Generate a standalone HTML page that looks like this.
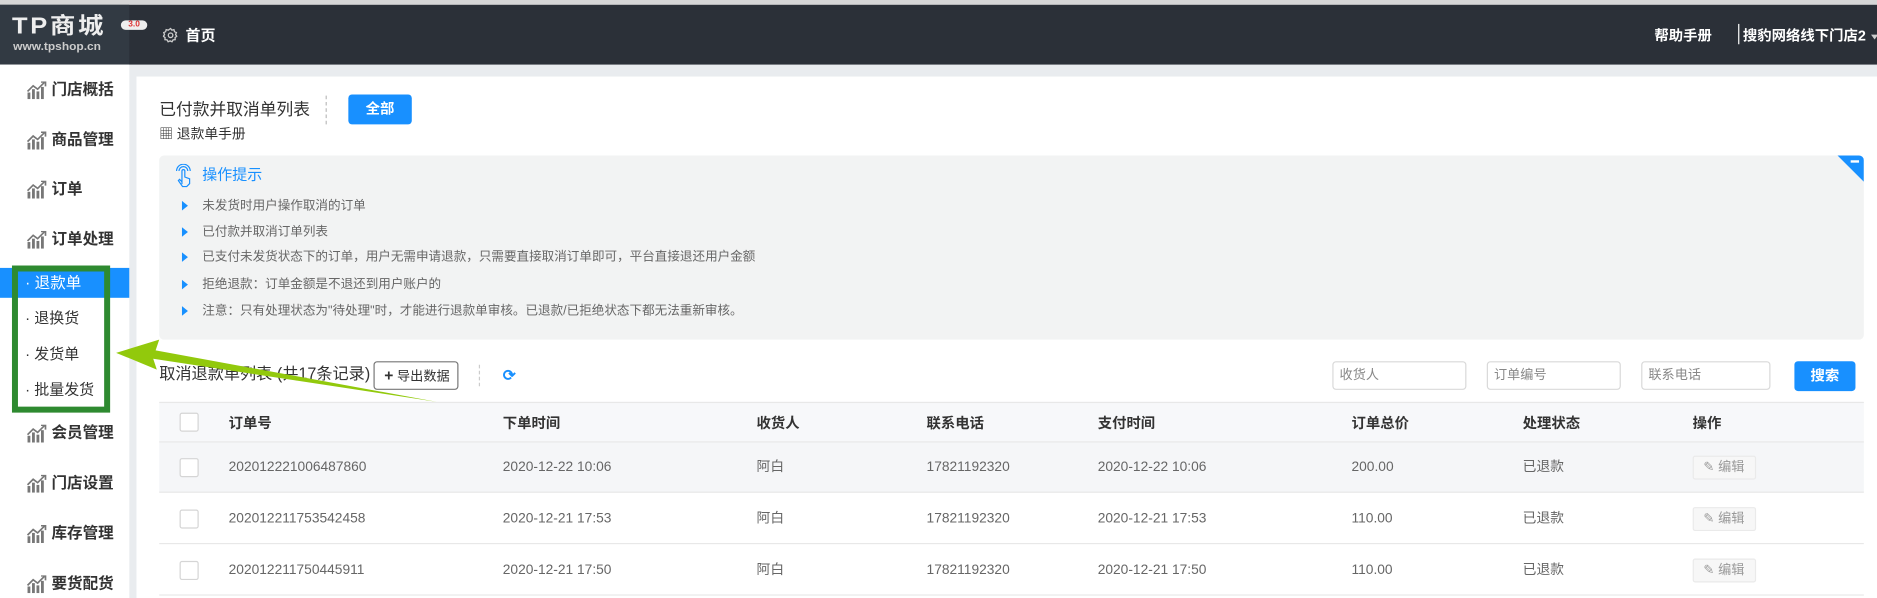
<!DOCTYPE html>
<html><head><meta charset="utf-8"><style>
*{margin:0;padding:0;box-sizing:border-box}
html,body{width:1877px;height:598px;overflow:hidden;background:#fff}
#w{position:absolute;left:0;top:0;width:1568px;height:500px;transform:scale(1.19707,1.196);transform-origin:0 0;font-family:"Liberation Sans","Noto Sans CJK SC",sans-serif;color:#333;background:#e9ecef}
.a{position:absolute;white-space:nowrap}
.si{position:absolute;left:22px;font-size:13px;font-weight:bold;color:#333;display:flex;align-items:center;gap:4px;line-height:18px}
.tri{position:absolute;left:152px;width:0;height:0;border-left:5px solid #1890ff;border-top:4px solid transparent;border-bottom:4px solid transparent}
.tip{position:absolute;left:169px;font-size:10.5px;color:#666;line-height:14px}
.th{position:absolute;font-size:12px;font-weight:bold;color:#333;line-height:16px}
.td{position:absolute;font-size:11.5px;color:#666;line-height:16px}
.cb{position:absolute;left:150px;width:16px;height:16px;border:1px solid #d5d5d5;border-radius:2px;background:#fff}
.ed{position:absolute;left:1414px;width:53px;height:20px;background:#f7f7f7;border:1px solid #eaeaea;border-radius:2px;font-size:11px;color:#999;padding-left:8px;line-height:18px}
.inp{position:absolute;top:302px;height:24px;border:1px solid #d9d9d9;border-radius:3px;background:#fff;font-size:11px;color:#888;padding-left:5px;line-height:22px}
</style></head><body><div id="w">
<div class="a" style="left:0;top:0;width:1568px;height:4px;background:#d6d6d6"></div>
<div class="a" style="left:0;top:4px;width:1568px;height:50px;background:#2b3038"></div>
<div class="a" style="left:0;top:4px;width:108px;height:50px;background:#323a43"></div>
<div class="a" style="left:10px;top:11px;font-size:19px;font-weight:bold;color:#eee;letter-spacing:2px;line-height:24px;transform:scaleX(1.12);transform-origin:0 0">TP商城</div>
<div class="a" style="left:101px;top:17px;width:22px;height:8px;border-radius:4px;background:#eee;font-size:7px;color:#d33;text-align:center;line-height:8px;font-weight:bold">3.0</div>
<div class="a" style="left:11px;top:34px;font-size:9.5px;font-weight:bold;color:#ccc;line-height:11px;transform:scaleX(1.05);transform-origin:0 0">www.tpshop.cn</div>
<svg class="a" style="left:136px;top:23px" width="13" height="13" viewBox="0 0 24 24" fill="none" stroke="#ccc" stroke-width="2"><circle cx="12" cy="12" r="3.5"/><path d="M12 1.5l2 2.6 3.2-.8.8 3.2 3 1.3-1.3 3 1.8 2.7-2.6 2 .2 3.3-3.3.3-1.6 2.9-3-1.4-3 1.4-1.6-2.9-3.3-.3.2-3.3-2.6-2 1.8-2.7-1.3-3 3-1.3.8-3.2 3.2.8z"/></svg>
<div class="a" style="left:155px;top:21px;font-size:12.5px;font-weight:bold;color:#fff;line-height:18px">首页</div>
<div class="a" style="left:1382px;top:21px;font-size:12px;font-weight:bold;color:#fff;line-height:18px">帮助手册</div>
<div class="a" style="left:1452px;top:20px;width:1px;height:17px;background:#fff"></div>
<div class="a" style="left:1456px;top:21px;font-size:12px;font-weight:bold;color:#fff;line-height:18px">搜豹网络线下门店2</div>
<div class="a" style="left:1563px;top:29px;border-top:4px solid #ccc;border-left:3px solid transparent;border-right:3px solid transparent"></div>
<div class="a" style="left:0;top:54px;width:108px;height:446px;background:#fff"></div>
<div class="a" style="left:114px;top:64px;width:1454px;height:436px;background:#fff"></div>
<svg width="0" height="0" style="position:absolute"><defs><symbol id="ic" viewBox="0 0 18 16"><g fill="#777"><rect x="1" y="10" width="2.5" height="6"/><rect x="5" y="7" width="2.5" height="9"/><rect x="9" y="9" width="2.5" height="7"/><rect x="13" y="5" width="2.5" height="11"/></g><path d="M1 9L6 4l4 3 6-6" stroke="#777" stroke-width="1.5" fill="none"/><path d="M13 0.5h4v4" stroke="#777" stroke-width="1.5" fill="none"/></symbol></defs></svg>
<div class="si" style="top:66px"><svg width="17" height="15"><use href="#ic"/></svg>门店概括</div>
<div class="si" style="top:108px"><svg width="17" height="15"><use href="#ic"/></svg>商品管理</div>
<div class="si" style="top:149px"><svg width="17" height="15"><use href="#ic"/></svg>订单</div>
<div class="si" style="top:191px"><svg width="17" height="15"><use href="#ic"/></svg>订单处理</div>
<div class="a" style="left:0;top:224px;width:108px;height:25px;background:#1890ff"></div>
<div class="a" style="left:21px;top:228px;font-size:13px;color:#fff;line-height:17px">· 退款单</div>
<div class="a" style="left:21px;top:258px;font-size:12.5px;color:#333;line-height:17px">· 退换货</div>
<div class="a" style="left:21px;top:288px;font-size:12.5px;color:#333;line-height:17px">· 发货单</div>
<div class="a" style="left:21px;top:318px;font-size:12.5px;color:#333;line-height:17px">· 批量发货</div>
<div class="a" style="left:10px;top:222px;width:82px;height:123px;border:5px solid #2e8a30"></div>
<div class="si" style="top:353px"><svg width="17" height="15"><use href="#ic"/></svg>会员管理</div>
<div class="si" style="top:395px"><svg width="17" height="15"><use href="#ic"/></svg>门店设置</div>
<div class="si" style="top:437px"><svg width="17" height="15"><use href="#ic"/></svg>库存管理</div>
<div class="si" style="top:479px"><svg width="17" height="15"><use href="#ic"/></svg>要货配货</div>
<div class="a" style="left:133px;top:82px;font-size:14px;color:#333;line-height:18px">已付款并取消单列表</div>
<div class="a" style="left:272px;top:80px;height:24px;border-left:1px dashed #bbb"></div>
<div class="a" style="left:291px;top:79px;width:53px;height:25px;background:#1890ff;border-radius:3px;color:#fff;font-size:12px;font-weight:bold;text-align:center;line-height:25px">全部</div>
<div class="a" style="left:133px;top:106px;font-size:11.5px;color:#333;line-height:15px">▦ 退款单手册</div>
<div class="a" style="left:133px;top:130px;width:1424px;height:154px;background:#f2f3f3;border-radius:4px;overflow:hidden">
<div class="a" style="right:0;top:0;border-top:22px solid #1890ff;border-left:22px solid transparent"></div>
<div class="a" style="right:4px;top:4px;width:7px;height:2px;background:#fff"></div>
</div>
<svg class="a" style="left:146px;top:137px" width="15" height="20" viewBox="0 0 15 20" fill="none" stroke="#1890ff" stroke-width="1"><path d="M6 17V6a1.2 1.2 0 012.4 0v5l4 1.5v4L10 19H6.5L3 14l1-1 2 2"/><path d="M3.5 6a3.7 3.7 0 017.4 0M1.5 6a5.7 5.7 0 0111.4 0"/></svg>
<div class="a" style="left:169px;top:138px;font-size:12.5px;color:#1890ff;line-height:16px">操作提示</div>
<div class="tri" style="top:168px"></div><div class="tip" style="top:165px">未发货时用户操作取消的订单</div>
<div class="tri" style="top:190px"></div><div class="tip" style="top:187px">已付款并取消订单列表</div>
<div class="tri" style="top:211px"></div><div class="tip" style="top:208px">已支付未发货状态下的订单，用户无需申请退款，只需要直接取消订单即可，平台直接退还用户金额</div>
<div class="tri" style="top:234px"></div><div class="tip" style="top:231px">拒绝退款：订单金额是不退还到用户账户的</div>
<div class="tri" style="top:256px"></div><div class="tip" style="top:253px">注意：只有处理状态为"待处理"时，才能进行退款单审核。已退款/已拒绝状态下都无法重新审核。</div>
<div class="a" style="left:133px;top:304px;font-size:13.5px;color:#333;line-height:18px">取消退款单列表 (共17条记录)</div>
<div class="a" style="left:312px;top:302px;width:71px;height:24px;border:1px solid #777;border-radius:3px;font-size:11px;color:#333;line-height:22px;padding-left:8px"><b style="font-size:13px">+</b> 导出数据</div>
<div class="a" style="left:400px;top:305px;height:18px;border-left:1px dashed #ccc"></div>
<div class="a" style="left:420px;top:306px;font-size:13px;color:#1890ff;font-weight:bold;line-height:16px">⟳</div>
<div class="inp" style="left:1113px;width:112px">收货人</div>
<div class="inp" style="left:1242px;width:112px">订单编号</div>
<div class="inp" style="left:1371px;width:108px">联系电话</div>
<div class="a" style="left:1499px;top:302px;width:51px;height:25px;background:#1890ff;border-radius:3px;color:#fff;font-size:12px;font-weight:bold;text-align:center;line-height:25px">搜索</div>
<div class="a" style="left:133px;top:336px;width:1424px;height:34px;background:#f7f8fa;border-top:1px solid #e8e8e8;border-bottom:1px solid #e8e8e8"></div>
<div class="a" style="left:133px;top:370px;width:1424px;height:42px;background:#f5f6f8;border-bottom:1px solid #e8e8e8"></div>
<div class="a" style="left:133px;top:412px;width:1424px;height:43px;border-bottom:1px solid #e8e8e8"></div>
<div class="a" style="left:133px;top:455px;width:1424px;height:43px;border-bottom:1px solid #e8e8e8"></div>
<div class="cb" style="top:345px"></div>
<div class="th" style="left:191px;top:346px">订单号</div><div class="th" style="left:420px;top:346px">下单时间</div><div class="th" style="left:632px;top:346px">收货人</div><div class="th" style="left:774px;top:346px">联系电话</div><div class="th" style="left:917px;top:346px">支付时间</div><div class="th" style="left:1129px;top:346px">订单总价</div><div class="th" style="left:1272px;top:346px">处理状态</div><div class="th" style="left:1414px;top:346px">操作</div>
<div class="cb" style="top:383px"></div>
<div class="td" style="left:191px;top:383px">202012221006487860</div><div class="td" style="left:420px;top:383px">2020-12-22 10:06</div><div class="td" style="left:632px;top:383px">阿白</div><div class="td" style="left:774px;top:383px">17821192320</div><div class="td" style="left:917px;top:383px">2020-12-22 10:06</div><div class="td" style="left:1129px;top:383px">200.00</div><div class="td" style="left:1272px;top:383px">已退款</div><div class="ed" style="top:381px">✎ 编辑</div>
<div class="cb" style="top:426px"></div>
<div class="td" style="left:191px;top:426px">202012211753542458</div><div class="td" style="left:420px;top:426px">2020-12-21 17:53</div><div class="td" style="left:632px;top:426px">阿白</div><div class="td" style="left:774px;top:426px">17821192320</div><div class="td" style="left:917px;top:426px">2020-12-21 17:53</div><div class="td" style="left:1129px;top:426px">110.00</div><div class="td" style="left:1272px;top:426px">已退款</div><div class="ed" style="top:424px">✎ 编辑</div>
<div class="cb" style="top:469px"></div>
<div class="td" style="left:191px;top:469px">202012211750445911</div><div class="td" style="left:420px;top:469px">2020-12-21 17:50</div><div class="td" style="left:632px;top:469px">阿白</div><div class="td" style="left:774px;top:469px">17821192320</div><div class="td" style="left:917px;top:469px">2020-12-21 17:50</div><div class="td" style="left:1129px;top:469px">110.00</div><div class="td" style="left:1272px;top:469px">已退款</div><div class="ed" style="top:467px">✎ 编辑</div>
<svg class="a" style="left:0;top:0" width="1568" height="500"><polygon points="97,295 133,284 130,293 365,336 128,300 131,309" fill="#92c90c"/></svg>
</div></body></html>
